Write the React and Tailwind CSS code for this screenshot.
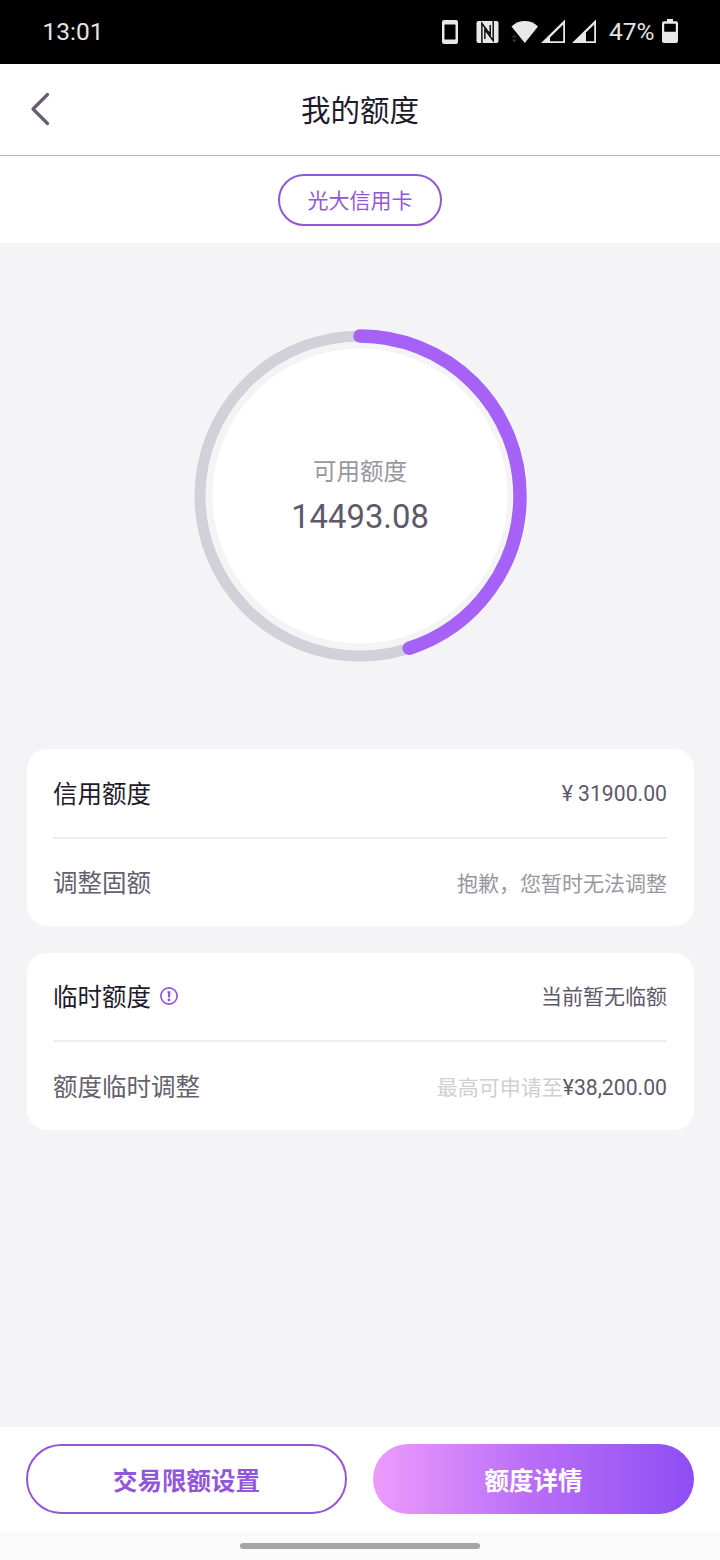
import clsx from "clsx";

const AVAILABLE = 14493.08;
const CREDIT_LIMIT = 31900;

const limitCards = [
  {
    id: "credit",
    rows: [
      { label: "信用额度", primary: true, value: "¥ 31900.00", tone: "dark" },
      { label: "调整固额", value: "抱歉，您暂时无法调整", tone: "muted" },
    ],
  },
  {
    id: "temporary",
    rows: [
      { label: "临时额度", primary: true, info: true, value: "当前暂无临额", tone: "dark" },
      { label: "额度临时调整", hint: "最高可申请至", value: "¥38,200.00", tone: "dark" },
    ],
  },
];

function StatusBar() {
  return (
    <div className="flex h-16 shrink-0 items-center justify-between bg-black pl-[42.500px] text-[#e4e4e4]">
      <span className="text-[24.500px] leading-none">13:01</span>
      <svg className="ml-auto" width="160" height="64" viewBox="440 0 160 64" fill="#e8e8e8">
        <path
          fillRule="evenodd"
          d="M444 20h12a2 2 0 0 1 2 2v20a2 2 0 0 1-2 2h-12a2 2 0 0 1-2-2v-20a2 2 0 0 1 2-2zM444.500 24.500v15h11v-15z"
        />
        <rect x="476.500" y="21" width="22" height="22" rx="2" />
        <path d="M481.900 43V23.300L490.200 34.500V25" fill="none" stroke="#000" strokeWidth="1.400" />
        <path d="M493.200 21V40.700L484.900 29.500V39" fill="none" stroke="#000" strokeWidth="1.400" />
        <path d="M511.500 26.500C519 19.200 530.500 19.200 538 26.500L524.800 43z" />
        <path d="M511.800 37.500l2.500-3 2.500 3zM511.800 39.500h5l-2.500 3z" fill="#333" />
        <path fillRule="evenodd" d="M565 19.500V43H541zM563.200 24.500L550 37.500v3.700h13.200z" />
        <path fillRule="evenodd" d="M596 19.500V43H572zM594.200 24.500L586 32.500v8.700h8.200z" />
      </svg>
      <span className="ml-[9.500px] text-[24.500px] leading-none">47%</span>
      <svg className="ml-[6.500px] mr-[41px]" width="18" height="64" viewBox="661 0 18 64" fill="#e8e8e8">
        <path
          fillRule="evenodd"
          d="M667 19h6v2.300h3a2 2 0 0 1 2 2V41a2 2 0 0 1-2 2h-12a2 2 0 0 1-2-2V23.300a2 2 0 0 1 2-2h3zM664.200 23.700v8h11.600v-8z"
        />
      </svg>
    </div>
  );
}

function Header() {
  return (
    <header className="grid h-[92px] shrink-0 grid-cols-[80px_1fr_80px] items-center border-b border-[#b7b6ba] bg-white">
      <button type="button" aria-label="返回" className="flex h-full items-center pb-px pl-[30px]">
        <svg width="22" height="36" viewBox="0 0 22 36" fill="none" stroke="#665e70" strokeWidth="3.200" strokeLinecap="round" strokeLinejoin="round">
          <path d="M17.500 3.500L3 18L17.500 32.500" />
        </svg>
      </button>
      <h1 className="pt-1 text-center text-[29.500px] leading-none text-[#1f1a2b]">我的额度</h1>
    </header>
  );
}

function LimitGauge() {
  const radius = 160;
  const length = 2 * Math.PI * radius;
  // the gauge only moves in whole percents
  const percent = Math.floor((AVAILABLE / CREDIT_LIMIT) * 100);

  return (
    <section className="grid h-[506px] shrink-0 place-items-center">
      <div className="grid size-[340px] place-items-center">
        <svg className="col-start-1 row-start-1" width="340" height="340" viewBox="0 0 340 340" fill="none">
          <circle cx="170" cy="170" r={radius} stroke="#d2d0d8" strokeWidth="11" />
          <circle cx="170" cy="170" r="147.500" fill="#fff" />
          <circle
            cx="170"
            cy="170"
            r={radius}
            transform="rotate(-90 170 170)"
            stroke="#a662f6"
            strokeWidth="13.500"
            strokeLinecap="round"
            strokeDasharray={`${(length * percent) / 100} ${length}`}
          />
        </svg>
        <div className="col-start-1 row-start-1 flex flex-col items-center gap-4 pt-[3px]">
          <span className="text-[23.500px] leading-none text-[#99969f]">可用额度</span>
          <span className="text-[32.800px] leading-none text-[#5f586b]">{AVAILABLE}</span>
        </div>
      </div>
    </section>
  );
}

function InfoIcon() {
  return (
    <svg width="18" height="18" viewBox="0 0 18 18" fill="none">
      <circle cx="9" cy="9" r="8.100" stroke="#9257d8" strokeWidth="1.700" />
      <path d="M7.500 4.300h3l-.6 6.200H8.100z" fill="#9257d8" />
      <circle cx="9" cy="13" r="1.400" fill="#9257d8" />
    </svg>
  );
}

function LimitRow({ row, divided }) {
  const isAmount = row.value.startsWith("¥");

  return (
    <div className={clsx("flex flex-1 items-center justify-between", divided && "border-t-2 border-[#eeedf0]")}>
      <div className="flex items-center gap-[9px]">
        <span className={clsx("pt-1 text-[24.500px] leading-none", row.primary ? "text-[#1f1a2b]" : "text-[#655f6e]")}>
          {row.label}
        </span>
        {row.info && <InfoIcon />}
      </div>
      <p className={clsx("text-[21px] leading-none", divided ? "pt-1" : "pt-[3px]")}>
        {row.hint && <span className="text-[#d0cfd2]">{row.hint}</span>}
        <span className={clsx(isAmount && "text-[21.200px]", row.tone === "muted" ? "text-[#99969f]" : "text-[#5f586b]")}>
          {row.value}
        </span>
      </p>
    </div>
  );
}

export default function App() {
  return (
    <div
      lang="zh-CN"
      className="flex h-[1560px] w-[720px] flex-col bg-[#f4f4f7] font-[Roboto,'Noto_Sans_CJK_SC',sans-serif]"
    >
      <StatusBar />
      <Header />
      <div className="flex h-[87px] shrink-0 items-center justify-center bg-white">
        <button type="button" className="h-[52px] w-[164px] rounded-full border-2 border-[#9257d8] pt-[3px] text-[21px] leading-none text-[#9257d8]">
          光大信用卡
        </button>
      </div>

      <main className="flex flex-1 flex-col">
        <LimitGauge />
        <div className="flex flex-col gap-[26.500px] px-[26.500px]">
          {limitCards.map((card) => (
            <section key={card.id} className="flex h-[177px] flex-col rounded-[20px] bg-white px-[26.500px]">
              {card.rows.map((row, i) => (
                <LimitRow key={row.label} row={row} divided={i > 0} />
              ))}
            </section>
          ))}
        </div>
      </main>

      <footer className="grid h-[105px] shrink-0 grid-cols-2 items-center gap-[26.600px] bg-white px-[26.400px] pb-px">
        <button type="button" className="h-[70px] rounded-full border-2 border-[#9257d8] pt-[6px] text-[24.500px] font-bold leading-none text-[#9257d8]">
          交易限额设置
        </button>
        <button type="button" className="h-[70px] rounded-full bg-linear-to-r from-[#ee9bfb] via-[#b96df7] to-[#8e4df3] pt-[6px] text-[24.500px] font-bold leading-none text-white">
          额度详情
        </button>
      </footer>
      <div className="flex h-7 shrink-0 items-center justify-center bg-[#fafafa]">
        <div className="h-[6px] w-60 rounded-full bg-[#a6a6a6]" />
      </div>
    </div>
  );
}
